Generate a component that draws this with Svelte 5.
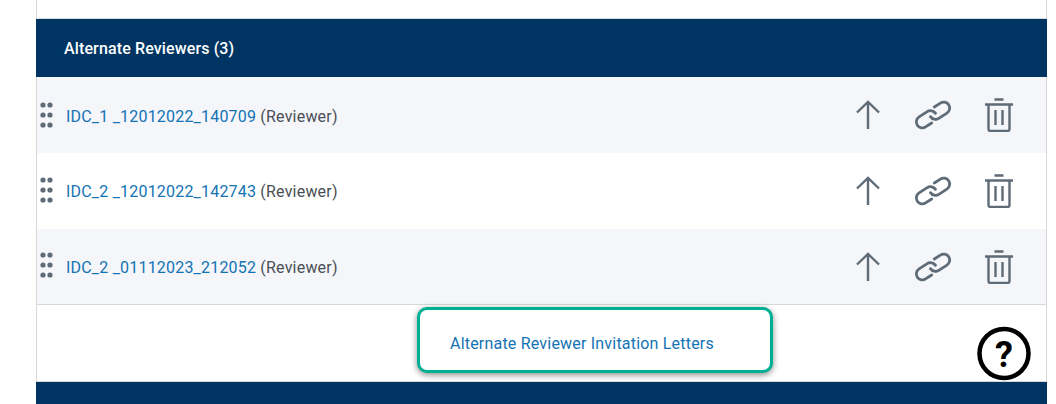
<script>
  const reviewers = [
    { name: 'IDC_1 _12012022_140709' },
    { name: 'IDC_2 _12012022_142743' },
    { name: 'IDC_2 _01112023_212052' }
  ];
</script>

<div class="page">
  <div class="panel">
    <div class="top"></div>
    <div class="header">Alternate Reviewers (3)</div>

    <div class="rows">
      {#each reviewers as r}
        <div class="row">
          <svg class="grip" width="13" height="28" viewBox="0 0 13 28">
            <g fill="#5f6b76">
              <circle cx="3" cy="4" r="2.6" /><circle cx="10" cy="4" r="2.6" />
              <circle cx="3" cy="14" r="2.6" /><circle cx="10" cy="14" r="2.6" />
              <circle cx="3" cy="24" r="2.6" /><circle cx="10" cy="24" r="2.6" />
            </g>
          </svg>
          <div class="label"><a href="#top">{r.name}</a> (Reviewer)</div>
          <div class="actions">
            <svg class="up" width="26" height="32" viewBox="0 0 26 32" fill="none" stroke="#5f6b76" stroke-width="2.4">
              <path d="M13 30V3M2 13.500 13 3l11 10.500" />
            </svg>
            <svg width="38" height="32" viewBox="-19 -16 38 32" fill="none" stroke="#5f6b76" stroke-width="2.8" stroke-linecap="round">
              <g transform="rotate(-33)">
                <path d="M-5.500 6H-12.700A6 6 0 0 1-12.700-6H-3A6 6 0 0 1 3 0" />
                <path d="M5.500-6H12.700A6 6 0 0 1 12.700 6H3A6 6 0 0 1-3 0" />
              </g>
            </svg>
            <svg width="30" height="34" viewBox="0 0 30 34" fill="none" stroke="#5f6b76" stroke-width="2.4">
              <path d="M1 6.500h28M10.500 1.500h9" />
              <path d="M4.500 6.500v24.500a2 2 0 0 0 2 2h17a2 2 0 0 0 2-2V6.500" />
              <path d="M11.500 12v15M18.500 12v15" />
            </svg>
          </div>
        </div>
      {/each}
    </div>

    <div class="letters">
      <div class="callout"><a href="#top">Alternate Reviewer Invitation Letters</a></div>
      <div class="help">
        <svg width="60" height="60" viewBox="0 0 60 60">
          <circle cx="30" cy="29.500" r="29" fill="#fff" />
          <circle cx="30" cy="29.500" r="24.500" fill="#fff" stroke="#000" stroke-width="4.500" />
          <text x="30" y="43" text-anchor="middle" class="mark">?</text>
        </svg>
      </div>
    </div>

    <div class="footer"></div>
  </div>
</div>

<style>
  :global(body) {
    margin: 0;
    background: #fff;
    overflow: hidden;
  }

  .page {
    width: 1056px;
    height: 404px;
    overflow: hidden;
    padding-left: 36px;
    box-sizing: border-box;
    font-family: Roboto, "Liberation Sans", sans-serif;
  }

  .panel {
    width: 1011px;
    box-sizing: border-box;
    border-left: 1px solid #d8d8d8;
    border-right: 1px solid #d8d8d8;
  }

  .top {
    box-sizing: border-box;
    height: 19px;
    border-bottom: 1px solid #d8d8d8;
  }

  .header {
    height: 58px;
    margin-left: -1px;
    margin-right: -1px;
    padding-left: 28px;
    display: flex;
    align-items: center;
    background: #003463;
    color: #fff;
    font-size: 16px;
    font-weight: 500;
    letter-spacing: 0.13px;
  }

  .rows {
    border-bottom: 1px solid #d8d8d8;
  }

  .row {
    height: 76px;
    display: flex;
    align-items: center;
    padding-left: 3px;
    box-sizing: border-box;
  }

  .row:nth-child(odd) {
    background: #f4f6fa;
  }

  .row:nth-child(odd) .label {
    margin-top: 2px;
  }

  .row:first-child .grip {
    margin-top: -1px;
  }

  .row:last-child {
    height: 75px;
  }

  .grip {
    margin-top: -3px;
  }

  .label {
    margin-left: 13px;
    font-size: 16px;
    letter-spacing: 0.2px;
    color: #4a4f55;
  }

  a {
    color: #1373b4;
    text-decoration: none;
  }

  .actions {
    margin-left: auto;
    margin-right: 32px;
    display: flex;
    align-items: center;
    gap: 32px;
  }

  .up {
    margin-right: 1px;
  }

  .letters {
    height: 76px;
    position: relative;
    padding-left: 380px;
  }

  .callout {
    position: relative;
    top: 2px;
    width: 356px;
    height: 66px;
    box-sizing: border-box;
    border: 3px solid #00b092;
    border-radius: 10px;
    background: #fff;
    box-shadow: 0 2px 6px rgba(0, 0, 0, 0.45);
    padding: 6px 0 0 30px;
    display: flex;
    align-items: center;
    font-size: 16px;
    letter-spacing: 0.2px;
  }

  .help {
    position: absolute;
    right: 12px;
    top: 19px;
    line-height: 0;
  }

  .mark {
    font-family: Roboto, "Liberation Sans", sans-serif;
    font-size: 36px;
    font-weight: 700;
    fill: #000;
  }

  .footer {
    position: relative;
    box-sizing: border-box;
    height: 30px;
    margin-left: -1px;
    margin-right: -1px;
    border-top: 1px solid #d8d8d8;
    background: #003463;
  }
</style>
